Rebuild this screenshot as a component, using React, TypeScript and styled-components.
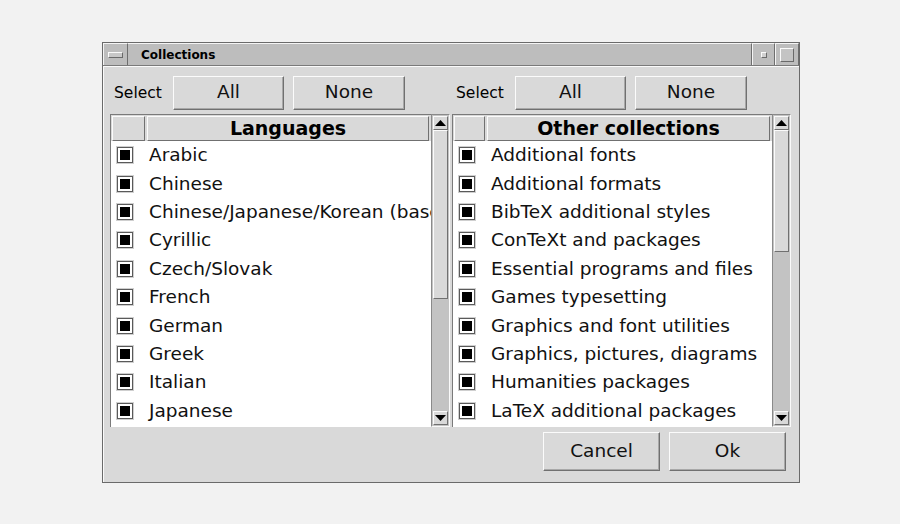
import React from "react";
import styled, { createGlobalStyle } from "styled-components";

const Global = createGlobalStyle`
  html, body {
    margin: 0;
    padding: 0;
    background: #f2f2f2;
    font-family: "DejaVu Sans", "Liberation Sans", sans-serif;
  }
`;

const languages = [
  "Arabic",
  "Chinese",
  "Chinese/Japanese/Korean (base)",
  "Cyrillic",
  "Czech/Slovak",
  "French",
  "German",
  "Greek",
  "Italian",
  "Japanese",
];

const others = [
  "Additional fonts",
  "Additional formats",
  "BibTeX additional styles",
  "ConTeXt and packages",
  "Essential programs and files",
  "Games typesetting",
  "Graphics and font utilities",
  "Graphics, pictures, diagrams",
  "Humanities packages",
  "LaTeX additional packages",
];

const S = {
  Window: styled.div`
    margin: 42px 0 0 102px;
    width: 698px;
    height: 441px;
    box-sizing: border-box;
    border: 1px solid #6a6a6a;
    background: #d9d9d9;
    display: flex;
    flex-direction: column;
    color: #000;
  `,
  TitleBar: styled.div`
    height: 23px;
    display: flex;
    background: #bdbdbd;
    border-bottom: 1px solid #7a7a7a;
    box-sizing: border-box;
  `,
  TitleButton: styled.div<{ $w: number }>`
    width: ${(p) => p.$w}px;
    box-sizing: border-box;
    border-top: 1px solid #f4f4f4;
    border-left: 1px solid #f4f4f4;
    border-right: 1px solid #6e6e6e;
    display: flex;
    align-items: center;
    justify-content: center;
  `,
  Dash: styled.span`
    width: 13px;
    height: 4px;
    background: #c8c8c8;
    border: 1px solid;
    border-color: #fafafa #6a6a6a #6a6a6a #fafafa;
  `,
  Dot: styled.span`
    width: 4px;
    height: 4px;
    background: #d0d0d0;
    border: 1px solid;
    border-color: #fafafa #6a6a6a #6a6a6a #fafafa;
  `,
  Square: styled.span`
    width: 12px;
    height: 12px;
    background: #c4c4c4;
    border: 1px solid;
    border-color: #fafafa #6a6a6a #6a6a6a #fafafa;
  `,
  Title: styled.div`
    flex: 1;
    display: flex;
    align-items: center;
    padding-left: 13px;
    font-size: 12px;
    font-weight: bold;
    border-top: 1px solid #f4f4f4;
    border-right: 1px solid #6e6e6e;
  `,
  Body: styled.div`
    flex: 1;
    display: flex;
    flex-direction: column;
    padding: 9px 9px 0 6px;
    border-left: 1px solid #fafafa;
    border-top: 1px solid #fafafa;
  `,
  Panes: styled.div`
    display: grid;
    grid-template-columns: 340px 339px;
    column-gap: 2px;
  `,
  Pane: styled.div`
    display: flex;
    flex-direction: column;
  `,
  SelectRow: styled.div`
    display: flex;
    align-items: center;
    height: 33px;
    padding-left: 5px;
    margin-bottom: 5px;
  `,
  SelectLabel: styled.span`
    font-size: 15.5px;
    width: 59px;
    margin-left: -1px;
    padding-top: 1px;
  `,
  Button: styled.button<{ $w: number; $h: number }>`
    width: ${(p) => p.$w}px;
    height: ${(p) => p.$h}px;
    margin-right: 9px;
    padding: 0 0 2px;
    background: #d9d9d9;
    font-family: "DejaVu Sans", sans-serif;
    font-size: 18.5px;
    color: #111;
    border: 1px solid;
    border-color: #fbfbfb #707070 #707070 #fbfbfb;
    box-shadow: inset -1px -1px 0 #a8a8a8;
    &:last-child {
      margin-right: 0;
    }
  `,
  ListBox: styled.div`
    display: flex;
    height: 313px;
  `,
  List: styled.div`
    flex: 1;
    display: flex;
    flex-direction: column;
    background: #fff;
    border-left: 1px solid #7a7a7a;
    border-top: 1px solid #7a7a7a;
    overflow: hidden;
  `,
  Header: styled.div`
    display: flex;
    height: 26px;
    background: #d9d9d9;
    padding: 1px 2px 0 1px;
    box-sizing: border-box;
    gap: 2px;
  `,
  HeadCell: styled.div<{ $w?: number }>`
    ${(p) => (p.$w ? `width: ${p.$w}px;` : "flex: 1;")}
    box-sizing: border-box;
    border: 1px solid;
    border-color: #fbfbfb #707070 #707070 #fbfbfb;
    display: flex;
    align-items: center;
    justify-content: center;
    padding-bottom: 1px;
    font-size: 19px;
    font-weight: bold;
  `,
  Row: styled.div`
    height: 28.4px;
    flex: none;
    display: flex;
    align-items: center;
    white-space: nowrap;
    font-size: 18.5px;
    color: #111;
    padding-bottom: 1px;
    box-sizing: border-box;
  `,
  Check: styled.span`
    width: 10px;
    height: 10px;
    margin: 1px 17px 0 7px;
    flex: none;
    background: #000;
    border: 2px solid #fff;
    outline: 1px solid #5a5a5a;
    box-shadow: 0 0 0 2px #cfcfcf;
  `,
  Scrollbar: styled.div`
    width: 19px;
    box-sizing: border-box;
    display: flex;
    flex-direction: column;
    background: #c3c3c3;
    border: 1px solid;
    border-color: #8a8a8a #fafafa #fafafa #8a8a8a;
    padding: 1px;
  `,
  Arrow: styled.div`
    height: 14px;
    flex: none;
    background: #d9d9d9;
    box-sizing: border-box;
    border: 1px solid;
    border-color: #fbfbfb #707070 #707070 #fbfbfb;
    display: flex;
    align-items: center;
    justify-content: center;
  `,
  Thumb: styled.div<{ $h: number }>`
    height: ${(p) => p.$h}px;
    flex: none;
    background: #d9d9d9;
    box-sizing: border-box;
    border: 1px solid;
    border-color: #fbfbfb #707070 #707070 #fbfbfb;
  `,
  Trough: styled.div`
    flex: 1;
  `,
  Footer: styled.div`
    display: flex;
    justify-content: flex-end;
    padding: 5px 4px 0 0;
  `,
};

const Up = () => (
  <svg width="11" height="6" viewBox="0 0 11 6">
    <path d="M5.5 0 L11 6 L0 6 Z" fill="#000" />
  </svg>
);

const Down = () => (
  <svg width="11" height="6" viewBox="0 0 11 6">
    <path d="M0 0 L11 0 L5.5 6 Z" fill="#000" />
  </svg>
);

const Pane = ({
  title,
  items,
  thumb,
  emptyW,
}: {
  title: string;
  items: string[];
  thumb: number;
  emptyW: number;
}) => (
  <S.Pane>
    <S.SelectRow>
      <S.SelectLabel>Select</S.SelectLabel>
      <S.Button $w={111} $h={34}>All</S.Button>
      <S.Button $w={112} $h={34}>None</S.Button>
    </S.SelectRow>
    <S.ListBox>
      <S.List>
        <S.Header>
          <S.HeadCell $w={emptyW} />
          <S.HeadCell>{title}</S.HeadCell>
        </S.Header>
        {items.map((it) => (
          <S.Row key={it}>
            <S.Check />
            {it}
          </S.Row>
        ))}
      </S.List>
      <S.Scrollbar>
        <S.Arrow>
          <Up />
        </S.Arrow>
        <S.Thumb $h={thumb} />
        <S.Trough />
        <S.Arrow>
          <Down />
        </S.Arrow>
      </S.Scrollbar>
    </S.ListBox>
  </S.Pane>
);

const App = () => {
  return (
    <>
      <Global />
      <S.Window>
        <S.TitleBar>
          <S.TitleButton $w={25}>
            <S.Dash />
          </S.TitleButton>
          <S.Title>Collections</S.Title>
          <S.TitleButton $w={23}>
            <S.Dot />
          </S.TitleButton>
          <S.TitleButton $w={24}>
            <S.Square />
          </S.TitleButton>
        </S.TitleBar>
        <S.Body>
          <S.Panes>
            <Pane title="Languages" items={languages} thumb={169} emptyW={33} />
            <Pane title="Other collections" items={others} thumb={122} emptyW={31} />
          </S.Panes>
          <S.Footer>
            <S.Button $w={117} $h={39}>Cancel</S.Button>
            <S.Button $w={117} $h={39}>Ok</S.Button>
          </S.Footer>
        </S.Body>
      </S.Window>
    </>
  );
};

export default App;
